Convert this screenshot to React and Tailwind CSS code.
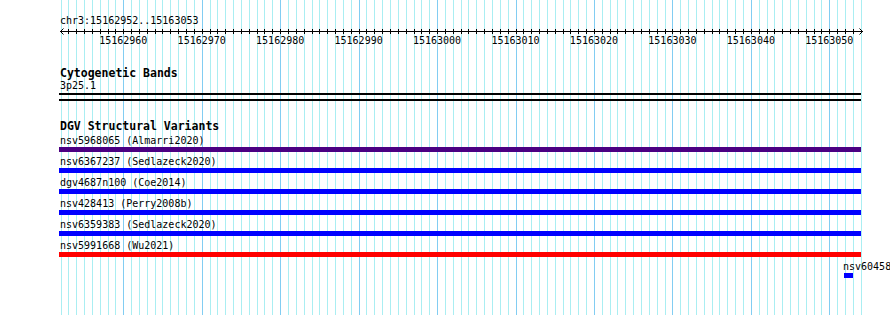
import React from "react";

const START = 15162952;
const PX0 = 60.5;
const STEP = 7.845;
const posOf = (i) => Math.round(PX0 + i * STEP);

const rows = [
  { label: "nsv5968065 (Almarri2020)", color: "bg-[#4b0082]" },
  { label: "nsv6367237 (Sedlazeck2020)", color: "bg-[#0000ff]" },
  { label: "dgv4687n100 (Coe2014)", color: "bg-[#0000ff]" },
  { label: "nsv428413 (Perry2008b)", color: "bg-[#0000ff]" },
  { label: "nsv6359383 (Sedlazeck2020)", color: "bg-[#0000ff]" },
  { label: "nsv5991668 (Wu2021)", color: "bg-[#ff0000]" },
];

function Grid() {
  const lines = [];
  for (let i = 0; i <= 102; i++) {
    const x = posOf(i) + 0.5;
    const major = (START + i) % 10 === 0;
    lines.push(
      <line
        key={i}
        x1={x}
        x2={x}
        y1={0}
        y2={315}
        stroke={major ? "#82cdf2" : "#aaeef2"}
        strokeWidth={1}
      />
    );
  }
  return (
    <svg
      className="absolute inset-0"
      width="890"
      height="315"
      shapeRendering="crispEdges"
    >
      {lines}
    </svg>
  );
}

function Ruler() {
  const ticks = [];
  for (let i = 0; i <= 102; i++) {
    const x = posOf(i) - 59 + 0.5;
    if (x < 3 || x > 800) continue;
    ticks.push(
      <line key={i} x1={x} x2={x} y1={2} y2={7} stroke="#000" strokeWidth={1} />
    );
  }
  return (
    <svg width="806" height="8" className="block" shapeRendering="crispEdges">
      <line x1={1} x2={804} y1={4.5} y2={4.5} stroke="#000" strokeWidth={1} />
      {ticks}
      <polyline points="4.5,1.5 1.5,4.5 4.5,7.5" fill="none" stroke="#000" strokeWidth={1} shapeRendering="auto" />
      <polyline points="800.5,1.5 803.5,4.5 800.5,7.5" fill="none" stroke="#000" strokeWidth={1} shapeRendering="auto" />
    </svg>
  );
}

function Labels() {
  const labels = [];
  for (let i = 0; i <= 102; i++) {
    if ((START + i) % 10 !== 0) continue;
    const x = PX0 + i * STEP - 59;
    labels.push(
      <div
        key={i}
        className="absolute top-0 -translate-x-1/2 whitespace-nowrap"
        style={{ left: `${x}px` }}
      >
        {START + i}
      </div>
    );
  }
  return <div className="relative h-[12px] text-[10px] leading-[12px]">{labels}</div>;
}

export default function App() {
  return (
    <div className="relative w-[890px] h-[315px] overflow-hidden bg-white text-black font-['DejaVu_Sans_Mono',monospace]">
      <Grid />
      <div className="relative flex flex-col pl-[59px] w-[890px]">
        <div className="mt-[15px] ml-[1px] h-[12px] text-[10px] leading-[12px] whitespace-nowrap">
          chr3:15162952..15163053
        </div>
        <Ruler />
        <Labels />
        <div className="mt-[20px] ml-[1px] h-[13px] text-[11.5px] leading-[13px] font-bold whitespace-nowrap">
          Cytogenetic Bands
        </div>
        <div className="ml-[1px] h-[12px] text-[10px] leading-[12px]">3p25.1</div>
        <div className="mt-[1px] h-[2px] w-[802px] bg-black" />
        <div className="mt-[4px] h-[2px] w-[802px] bg-black" />
        <div className="mt-[19px] ml-[1px] h-[13px] text-[11.5px] leading-[13px] font-bold whitespace-nowrap">
          DGV Structural Variants
        </div>
        <div className="mt-[2px] flex flex-col gap-[4px]">
          {rows.map((r) => (
            <div key={r.label} className="flex flex-col">
              <div className="ml-[1px] h-[12px] text-[10px] leading-[12px] whitespace-nowrap">
                {r.label}
              </div>
              <div className={`h-[5px] w-[802px] ${r.color}`} />
            </div>
          ))}
          <div className="flex flex-col">
            <div className="ml-[784px] h-[12px] text-[10px] leading-[12px] whitespace-nowrap">
              nsv6045832 (Sedlazeck2020)
            </div>
            <div className="ml-[785px] h-[5px] w-[9px] bg-[#0000ff]" />
          </div>
        </div>
      </div>
    </div>
  );
}
